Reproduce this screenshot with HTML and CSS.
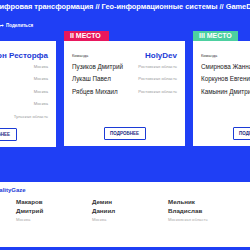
FILE: index.html
```html
<!DOCTYPE html>
<html lang="ru">
<head>
<meta charset="utf-8">
<link rel="stylesheet" href="styles.css">
</head>
<body>
<section class="hero">
  <h1 class="title">Цифровая трансформация // Гео-информационные системы // GameDev</h1>
  <div class="share">
    <svg class="share-icon" viewBox="0 0 10 10" width="5" height="5"><path d="M1 9 V6 Q1 4 4 4 H7 V2 L9.5 5 L7 8 V6 H4 Q2.5 6 1 9 Z" fill="#fff"/></svg>
    <span>Поделиться</span>
  </div>
  <div class="cards">
    <div class="place">
      <div class="tab tab-gold">I МЕСТО</div>
      <div class="card card-first">
        <div class="card-head"><span class="label">Команда</span><span class="team">Патрон Ресторфа</span></div>
        <div class="row"><span class="name">Иванова Анна</span><span class="region">Москва</span></div>
        <div class="row"><span class="name">Сергеев Олег</span><span class="region">Москва</span></div>
        <div class="row"><span class="name">Петров Петр</span><span class="region">Москва</span></div>
        <div class="row"><span class="name">Юрина Алена</span><span class="region">Москва</span></div>
        <div class="row"><span class="name">Котов Илья</span><span class="region">Тульская область</span></div>
        <div class="btn-wrap"><span class="btn">ПОДРОБНЕЕ</span></div>
      </div>
    </div>
    <div class="place">
      <div class="tab tab-pink">II МЕСТО</div>
      <div class="card">
        <div class="card-head"><span class="label">Команда</span><span class="team">HolyDev</span></div>
        <div class="row"><span class="name">Пузиков Дмитрий</span><span class="region">Ростовская область</span></div>
        <div class="row"><span class="name">Лукаш Павел</span><span class="region">Ростовская область</span></div>
        <div class="row"><span class="name">Рябцев Михаил</span><span class="region">Ростовская область</span></div>
        <div class="btn-wrap"><span class="btn">ПОДРОБНЕЕ</span></div>
      </div>
    </div>
    <div class="place">
      <div class="tab tab-green">III МЕСТО</div>
      <div class="card">
        <div class="card-head"><span class="label">Команда</span><span class="team">Team</span></div>
        <div class="row"><span class="name">Смирнова Жанна</span><span class="region">Москва</span></div>
        <div class="row"><span class="name">Коркунов Евгений</span><span class="region">Москва</span></div>
        <div class="row"><span class="name">Камынин Дмитрий</span><span class="region">Москва</span></div>
        <div class="btn-wrap"><span class="btn">ПОДРОБНЕЕ</span></div>
      </div>
    </div>
  </div>
</section>
<section class="team-panel">
  <div class="panel-team">QualityGaze</div>
  <div class="members">
    <div class="member"><div class="m-name">Макаров<br>Дмитрий</div><div class="m-region">Москва</div></div>
    <div class="member"><div class="m-name">Демин<br>Даниил</div><div class="m-region">Москва</div></div>
    <div class="member"><div class="m-name">Мельник<br>Владислав</div><div class="m-region">Московская область</div></div>
  </div>
</section>
<div class="footer-strip"></div>
</body>
</html>
```
FILE: styles.css
```css
html, body {
  margin: 0;
  padding: 0;
  width: 250px;
  height: 250px;
  overflow: hidden;
  background: #1f3ff5;
  font-family: "Liberation Sans", Arial, sans-serif;
}
.hero {
  background: #1f3ff5;
  height: 182px;
  box-sizing: border-box;
  padding-top: 2px;
}
.title {
  margin: 0 0 0 -6px;
  font-size: 7.4px;
  line-height: 10px;
  font-weight: 700;
  color: #fff;
  white-space: nowrap;
}
.share {
  display: flex;
  align-items: center;
  gap: 2px;
  margin: 10px 0 0 -1px;
  color: #fff;
  font-size: 4.5px;
  font-weight: 700;
  height: 6px;
}
.cards {
  display: flex;
  gap: 8px;
  margin: 3px 0 0 -65px;
}
.place {
  width: 121px;
  flex: none;
  display: flex;
  flex-direction: column;
}
.tab {
  align-self: flex-start;
  width: 45px;
  height: 10px;
  box-sizing: border-box;
  padding-left: 6px;
  color: #fff;
  font-size: 7px;
  font-weight: 700;
  line-height: 10px;
  white-space: nowrap;
}
.tab-gold { background: #f4b400; }
.tab-pink { background: #e8175d; }
.tab-green { background: #4dd0a0; }
.card {
  background: #fff;
  height: 105px;
  box-sizing: border-box;
  padding: 9px 8px 0 8px;
  display: flex;
  flex-direction: column;
}
.card-first {
  height: 106px;
}
.card-first .btn-wrap {
  margin-bottom: 6px;
}
.card-head {
  display: flex;
  justify-content: space-between;
  align-items: center;
  height: 10px;
}
.label {
  font-size: 4px;
  color: #333;
}
.team {
  font-size: 8px;
  font-weight: 700;
  color: #1c3bd6;
  white-space: nowrap;
}
.row {
  display: flex;
  justify-content: space-between;
  align-items: center;
  height: 12.5px;
}
.name {
  font-size: 6.3px;
  color: #222;
  white-space: nowrap;
}
.region {
  font-size: 4.2px;
  color: #999;
  white-space: nowrap;
}
.btn-wrap {
  margin-top: auto;
  margin-bottom: 6px;
  display: flex;
  justify-content: center;
}
.btn {
  width: 42px;
  height: 13px;
  box-sizing: border-box;
  border: 1px solid #1c3bd6;
  border-radius: 1px;
  color: #1a2a80;
  font-size: 4.5px;
  font-weight: 700;
  display: flex;
  align-items: center;
  justify-content: center;
}
.team-panel {
  background: #fff;
  height: 65px;
  box-sizing: border-box;
  padding-top: 4px;
}
.panel-team {
  margin-left: -9px;
  font-size: 6px;
  font-weight: 700;
  color: #1c3bd6;
  line-height: 8px;
}
.members {
  display: grid;
  grid-template-columns: repeat(3, 76px);
  margin: 4px 0 0 16px;
}
.m-name {
  font-size: 6.2px;
  font-weight: 700;
  color: #333;
  line-height: 8.5px;
}
.m-region {
  margin-top: 2px;
  font-size: 4.2px;
  color: #aaa;
}
.footer-strip {
  height: 3px;
  background: #1f3ff5;
}
```
